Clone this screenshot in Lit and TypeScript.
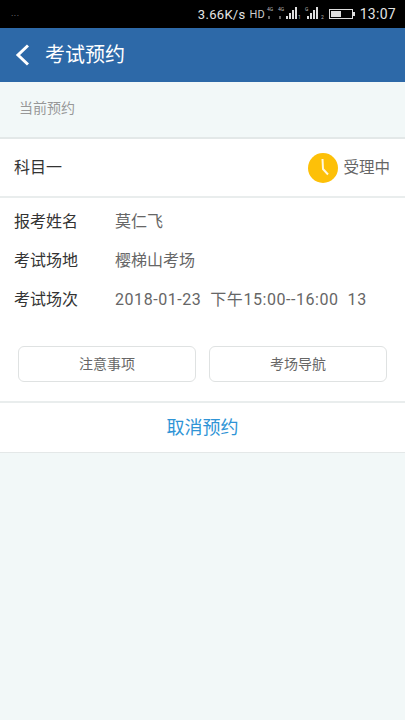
import { LitElement, html, css } from "lit";
import { customElement } from "lit/decorators.js";

@customElement("app-root")
export class AppRoot extends LitElement {
  static styles = css`
    :host { display: block; width: 405px; height: 720px; background: #f2f8f8; overflow: hidden;
      font-family: "Noto Sans CJK SC", "Noto Sans", sans-serif; color: #333; }
    .status { height: 28px; background: #000; color: #e4e4e4; display: flex; align-items: center; padding: 0 9px 0 11px; box-sizing: border-box; font-family: "Roboto", sans-serif; }
    .dots { font-size: 9px; color: #888; letter-spacing: 0.5px; margin-right: auto; margin-top: -3px; }
    .speed { font-size: 13px; letter-spacing: 0.3px; margin-right: 4px; }
    .hd { font-size: 11px; margin-right: 1px; color: #ccc; }
    .clock { font-size: 14px; margin-left: 5px; letter-spacing: 0.3px; }
    .sig { display: block; margin-right: 3px; }
    .tiny { font: 5px "Roboto", sans-serif; fill: #bbb; }
    .batt { display: block; margin-left: 1px; }
    .bar { height: 54px; background: #2d69a8; color: #fff; display: flex; align-items: center; padding-left: 15px; }
    .bar svg { display: block; margin-right: 16px; }
    .bar span { font-size: 20px; line-height: 1; margin-top: -3px; }
    .section { height: 57px; box-sizing: border-box; display: flex; align-items: center; padding: 0 0 5px 19px; font-size: 14px; color: #989898; border-bottom: 2px solid #e3e8e8; }
    .card { background: #fff; border-bottom: 1px solid #e4e8e8; }
    .head { height: 59px; box-sizing: border-box; border-bottom: 2px solid #e9eded; display: flex; align-items: center; padding: 0 15px 0 14px; font-size: 16px; color: #333; }
    .head .subj { margin-right: auto; margin-top: -3px; }
    .state { display: flex; align-items: center; color: #666; gap: 5px; }
    .state svg { display: block; }
    .state span { margin-top: -3px; font-size: 15.5px; }
    .rows { display: flex; flex-direction: column; padding: 2px 0 0 14px; }
    .row { height: 39px; display: flex; align-items: center; font-size: 16px; }
    .k { width: 101px; color: #333; }
    .v { color: #666; white-space: pre; font-size: 16px; }
    .num { font-family: "Roboto", "Noto Sans CJK SC", sans-serif; letter-spacing: 0.55px; }
    .btns { display: flex; gap: 13px; padding: 29px 18px 19px; }
    .btn { flex: 1; height: 36px; box-sizing: border-box; border: 1px solid #dfe2e2; border-radius: 6px; display: flex; align-items: center; justify-content: center; font-size: 14px; color: #666; background: #fff; padding-bottom: 3px; }
    .cancel { height: 51px; border-top: 2px solid #e9eded; box-sizing: border-box; display: flex; align-items: center; justify-content: center; font-size: 18px; color: #2f94d6; padding-bottom: 4px; }
  `;

  render() {
    return html`
      <div class="status">
        <span class="dots">...</span>
        <span class="speed">3.66K/s</span>
        <span class="hd">HD</span>
        <svg class="sig" width="35" height="14" viewBox="0 0 35 14" fill="#ddd">
          <text class="tiny" x="1" y="4">4G</text><text class="tiny" x="12" y="4">4G</text>
          <path d="M3 12 V9 M14 12 V9" stroke="#aaa" stroke-width="1.2"/>
          <rect x="20" y="9" width="2" height="3"/><rect x="23" y="6" width="2" height="6"/><rect x="26" y="3" width="2" height="9"/><rect x="29" y="0" width="2" height="12"/>
          <text class="tiny" x="32" y="12">1</text>
        </svg>
        <svg class="sig" width="21" height="14" viewBox="0 0 21 14" fill="#ddd">
          <text class="tiny" x="1" y="4">G</text>
          <rect x="3" y="9" width="2" height="3"/><rect x="6" y="6" width="2" height="6"/><rect x="9" y="3" width="2" height="9"/><rect x="12" y="0" width="2" height="12"/>
          <text class="tiny" x="17" y="12">2</text>
        </svg>
        <svg class="batt" width="26" height="12" viewBox="0 0 26 12">
          <rect x="0.5" y="1.5" width="23" height="9" fill="none" stroke="#ddd"/>
          <rect x="2" y="3" width="10" height="6" fill="#ddd"/>
          <rect x="24" y="4" width="2" height="4" fill="#ddd"/>
        </svg>
        <span class="clock">13:07</span>
      </div>
      <div class="bar">
        <svg width="14" height="22" viewBox="0 0 14 22"><path d="M13 1.5 L3 11 L13 20.5" fill="none" stroke="#fff" stroke-width="3"/></svg>
        <span>考试预约</span>
      </div>
      <div class="section">当前预约</div>
      <div class="card">
        <div class="head">
          <span class="subj">科目一</span>
          <div class="state">
            <svg width="30" height="30" viewBox="0 0 30 30">
              <circle cx="15" cy="15" r="15" fill="#fdc008"/>
              <path d="M14.5 6 L15 16 L20 21.5" fill="none" stroke="#fff8e0" stroke-width="2"/>
            </svg>
            <span>受理中</span>
          </div>
        </div>
        <div class="rows">
          <div class="row"><span class="k">报考姓名</span><span class="v">莫仁飞</span></div>
          <div class="row"><span class="k">考试场地</span><span class="v">樱梯山考场</span></div>
          <div class="row"><span class="k">考试场次</span><span class="v num">2018-01-23  下午15:00--16:00  13</span></div>
        </div>
        <div class="btns">
          <div class="btn">注意事项</div>
          <div class="btn">考场导航</div>
        </div>
        <div class="cancel">取消预约</div>
      </div>
    `;
  }
}
